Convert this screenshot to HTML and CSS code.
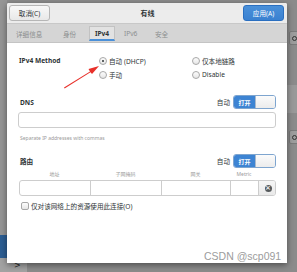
FILE: index.html
```html
<!DOCTYPE html>
<html>
<head>
<meta charset="utf-8">
<link rel="stylesheet" href="styles.css">
</head>
<body>
<div class="desktop">
  <div class="side-left"></div>
  <div class="side-left-blue"></div>
  <div class="side-bottom-left"><span class="chev">&gt;</span></div>
  <div class="side-right-band"></div>
  <div class="side-btn btn-a"><span class="gear"></span></div>
  <div class="side-btn btn-b"><span class="gear"></span></div>

  <div class="dialog">
    <div class="header">
      <button class="btn">取消(C)</button>
      <div class="title">有线</div>
      <button class="btn primary">应用(A)</button>
    </div>
    <div class="tabs">
      <span class="tab t1">详细信息</span>
      <span class="tab t2">身份</span>
      <span class="tab t3 active">IPv4</span>
      <span class="tab t4">IPv6</span>
      <span class="tab t5">安全</span>
    </div>
    <div class="content">
      <div class="method">
        <div class="label">IPv4 Method</div>
        <div class="radios">
          <div class="radio"><span class="dot on"></span>自动 (DHCP)</div>
          <div class="radio"><span class="dot"></span>仅本地链路</div>
          <div class="radio"><span class="dot"></span>手动</div>
          <div class="radio"><span class="dot"></span>Disable</div>
        </div>
      </div>

      <div class="section-head dns-head">
        <div class="sec-title">DNS</div>
        <div class="auto">自动
          <div class="switch"><span class="sw-on">打开</span><span class="sw-off"></span></div>
        </div>
      </div>
      <div class="input"></div>
      <div class="hint">Separate IP addresses with commas</div>

      <div class="section-head route-head">
        <div class="sec-title bold">路由</div>
        <div class="auto">自动
          <div class="switch"><span class="sw-on">打开</span><span class="sw-off"></span></div>
        </div>
      </div>
      <div class="cols">
        <span>地址</span><span>子网掩码</span><span>网关</span><span>Metric</span><span></span>
      </div>
      <div class="route-row">
        <span class="cell"></span><span class="cell"></span><span class="cell"></span><span class="cell"></span>
        <span class="cell clear"><span class="x-icon">&times;</span></span>
      </div>
      <div class="check-row"><span class="checkbox"></span>仅对该网络上的资源使用此连接(O)</div>
    </div>

    <svg class="arrow" width="40" height="30" viewBox="0 0 40 30">
      <polygon points="1,27.5 27,11.5 25.5,9 36,6 29,14 27.5,12.3 1.6,28.5" fill="#e8302a"/>
    </svg>
  </div>
  <div class="watermark">CSDN @scp091</div>
</div>
</body>
</html>
```

FILE: styles.css
```css
* { box-sizing: border-box; }
html, body { margin: 0; padding: 0; }
body {
  width: 297px; height: 272px; overflow: hidden;
  background: #8b8b8b;
  font-family: "Noto Sans", "Noto Sans CJK SC", sans-serif;
  font-size: 6.6px;
  color: #2e3436;
}
.desktop { position: relative; width: 297px; height: 272px; }

.side-left { position: absolute; left: 0; top: 0; width: 7px; height: 235px; background: #959595; }
.side-left-blue { position: absolute; left: 0; top: 235px; width: 7px; height: 23px; background: #2c5d92; }
.side-bottom-left { position: absolute; left: 0; top: 258px; width: 27px; height: 14px; background: #a2a2a2; }
.chev { position: absolute; left: 14px; top: 3px; font-size: 8px; color: #222; font-family: "DejaVu Sans", sans-serif; }
.side-right-band { position: absolute; left: 287px; top: 85px; width: 10px; height: 28px; background: #999; }
.side-btn { position: absolute; left: 289px; width: 12px; height: 14px; background: #9d9d9d; border: 1px solid #7a7a7a; border-radius: 2px; }
.btn-a { top: 31px; }
.btn-b { top: 130px; }
.gear { position: absolute; left: 2px; top: 4px; width: 5px; height: 5px; border-radius: 50%; border: 1.5px solid #333; }

.dialog {
  position: absolute; left: 7px; top: 3px; width: 280px; height: 260px;
  background: #fff;
  box-shadow: 0 2px 6px rgba(0,0,0,0.45);
  border-radius: 2px 2px 0 0;
}
.header {
  height: 21px; background: #ececec;
  display: flex; align-items: center; justify-content: space-between;
  padding: 0 3px 0 2px;
  border-bottom: 1px solid #c8c8c8;
  border-radius: 2px 2px 0 0;
}
.btn {
  width: 41px; height: 16px; padding: 0;
  font: inherit; font-size: 6.6px; color: #2e3436;
  border: 1px solid #b6b6b6; border-radius: 3px;
  background: linear-gradient(#f8f8f8, #e8e8e8);
}
.btn.primary {
  color: #fff; border-color: #2a6fc0;
  background: linear-gradient(#4a90d9, #3a81d1);
}
.title { font-size: 7px; font-weight: bold; color: #2e3436; margin-left: 2px; }

.tabs {
  position: relative; height: 19px; background: #d5d5d5;
  border-bottom: 1px solid #c4c4c4;
}
.tab { position: absolute; top: 5px; color: #8b8e8f; }
.t1 { left: 9px; }
.t2 { left: 56px; }
.t3 { left: 82px; top: 2px; width: 26px; height: 15px; line-height: 14px; text-align: center; color: #2e3436;
  background: #e2e2e2; border: 1px solid #c2c2c2; border-bottom: 2px solid #4a90d9; font-weight: bold; }
.t4 { left: 117px; }
.t5 { left: 148px; }

.content { padding: 12px 11px 0 12px; position: relative; }

.method { display: flex; }
.method .label { width: 80px; padding-top: 1px; font-weight: bold; color: #2e3436; }
.radios { display: grid; grid-template-columns: 93px 80px; row-gap: 3px; }
.radio { display: flex; align-items: center; height: 11px; color: #2e3436; }
.dot {
  width: 8px; height: 8px; border-radius: 50%;
  border: 1px solid #a8a8a8; background: linear-gradient(#fdfdfd, #e6e6e6);
  margin-right: 2px; position: relative;
}
.dot.on::after {
  content: ""; position: absolute; left: 2px; top: 2px; width: 2px; height: 2px; border-radius: 50%; background: #2e3436;
}

.section-head { display: flex; justify-content: space-between; align-items: center; height: 14px; }
.dns-head { margin-top: 15px; }
.route-head { margin-top: 13px; }
.sec-title { font-weight: bold; padding-left: 1px; }
.auto { display: flex; align-items: center; gap: 3px; color: #2e3436; }
.switch {
  width: 43px; height: 14px; display: flex;
  border: 1px solid #7ea5cf; border-radius: 3px; overflow: hidden;
}
.sw-on { width: 21px; background: #3d84d3; color: #fff; font-size: 6px; display: flex; align-items: center; justify-content: center; font-weight: bold; }
.sw-off { flex: 1; background: linear-gradient(#fbfbfb, #ececec); border-left: 1px solid #a9b9cc; }

.input {
  margin-top: 3px; margin-left: -1px; height: 16px;
  border: 1px solid #cdcdcd; border-radius: 3px; background: #fff;
}
.hint { margin-top: 7px; font-size: 5px; color: #9a9a9a; padding-left: 1px; }

.cols {
  display: grid; grid-template-columns: 71px 71px 69px 28px 18px;
  margin-top: 1px; font-size: 5px; color: #9a9a9a; text-align: center; height: 9px; align-items: center;
}
.route-row {
  display: grid; grid-template-columns: 71px 71px 69px 28px 18px;
  height: 16px; margin-top: 2px;
  border: 1px solid #cdcdcd; border-radius: 3px; overflow: hidden;
}
.cell { border-right: 1px solid #cdcdcd; }
.cell.clear { border-right: none; background: linear-gradient(#f6f6f6, #e9e9e9); display: flex; align-items: center; justify-content: center; }
.x-icon {
  width: 7px; height: 7px; border-radius: 50%; background: #55595b; color: #eee;
  font-size: 7px; line-height: 7px; text-align: center; font-family: "DejaVu Sans", sans-serif; font-weight: bold;
}
.check-row { display: flex; align-items: center; margin-top: 5px; padding-left: 2px; color: #2e3436; }
.checkbox {
  width: 8px; height: 8px; border: 1px solid #a8a8a8; border-radius: 2px;
  background: linear-gradient(#fdfdfd, #e6e6e6); margin-right: 2px;
}

.arrow { position: absolute; left: 56px; top: 57px; }

.watermark {
  position: absolute; left: 204px; top: 250px;
  font-family: "Liberation Sans", Arial, sans-serif; font-size: 10.5px;
  color: #9c9c9c;
}
```
